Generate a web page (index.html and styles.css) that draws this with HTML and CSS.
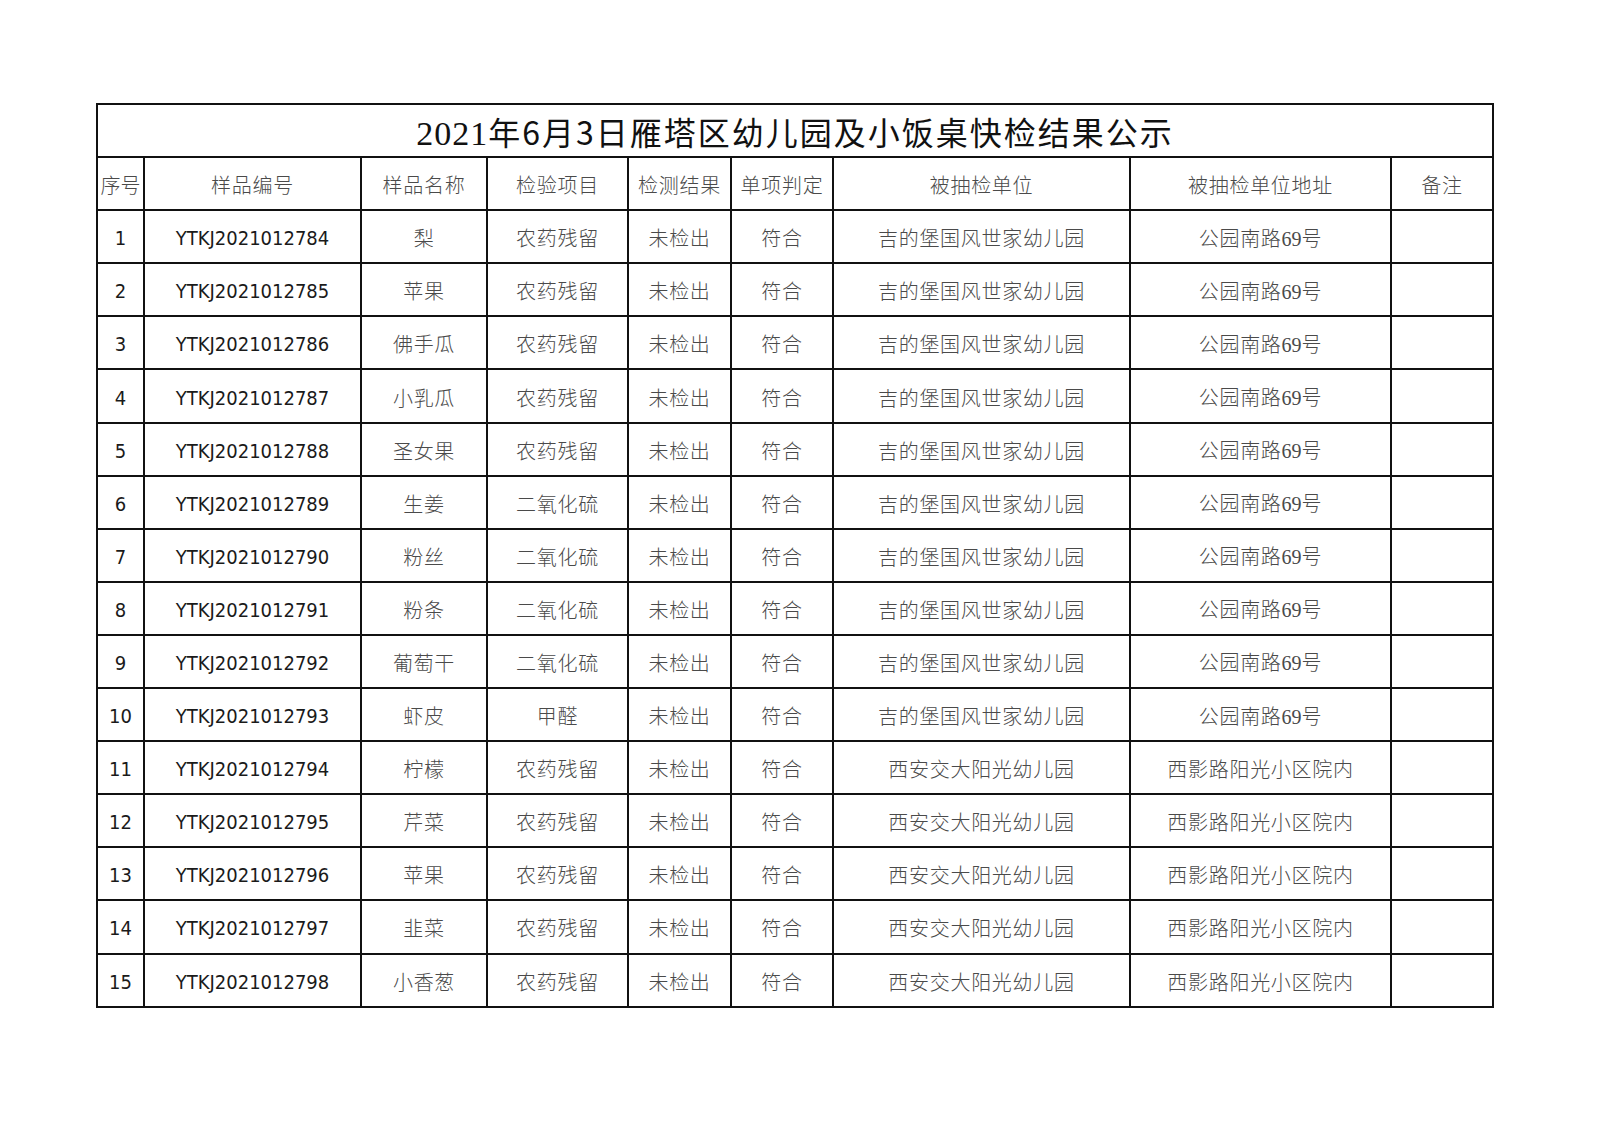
FILE: index.html
```html
<!DOCTYPE html>
<html>
<head>
<meta charset="utf-8">
<title>2021年6月3日雁塔区幼儿园及小饭桌快检结果公示</title>
<link rel="stylesheet" href="styles.css">
</head>
<body>
<div class="page">
<table class="sheet">
<colgroup>
<col class="c1"><col class="c2"><col class="c3"><col class="c4"><col class="c5"><col class="c6"><col class="c7"><col class="c8"><col class="c9">
</colgroup>
<thead>
<tr class="title-row"><th colspan="9" class="title"><span class="lat">2021</span>年6月3日雁塔区幼儿园及小饭桌快检结果公示</th></tr>
<tr class="head-row"><th class="tight">序号</th><th>样品编号</th><th>样品名称</th><th>检验项目</th><th>检测结果</th><th>单项判定</th><th>被抽检单位</th><th>被抽检单位地址</th><th>备注</th></tr>
</thead>
<tbody>
<tr><td class="num">1</td><td class="num">YTKJ2021012784</td><td>梨</td><td>农药残留</td><td>未检出</td><td>符合</td><td>吉的堡国风世家幼儿园</td><td>公园南路<span class="lat">69</span>号</td><td></td></tr>
<tr><td class="num">2</td><td class="num">YTKJ2021012785</td><td>苹果</td><td>农药残留</td><td>未检出</td><td>符合</td><td>吉的堡国风世家幼儿园</td><td>公园南路<span class="lat">69</span>号</td><td></td></tr>
<tr><td class="num">3</td><td class="num">YTKJ2021012786</td><td>佛手瓜</td><td>农药残留</td><td>未检出</td><td>符合</td><td>吉的堡国风世家幼儿园</td><td>公园南路<span class="lat">69</span>号</td><td></td></tr>
<tr><td class="num">4</td><td class="num">YTKJ2021012787</td><td>小乳瓜</td><td>农药残留</td><td>未检出</td><td>符合</td><td>吉的堡国风世家幼儿园</td><td>公园南路<span class="lat">69</span>号</td><td></td></tr>
<tr><td class="num">5</td><td class="num">YTKJ2021012788</td><td>圣女果</td><td>农药残留</td><td>未检出</td><td>符合</td><td>吉的堡国风世家幼儿园</td><td>公园南路<span class="lat">69</span>号</td><td></td></tr>
<tr><td class="num">6</td><td class="num">YTKJ2021012789</td><td>生姜</td><td>二氧化硫</td><td>未检出</td><td>符合</td><td>吉的堡国风世家幼儿园</td><td>公园南路<span class="lat">69</span>号</td><td></td></tr>
<tr><td class="num">7</td><td class="num">YTKJ2021012790</td><td>粉丝</td><td>二氧化硫</td><td>未检出</td><td>符合</td><td>吉的堡国风世家幼儿园</td><td>公园南路<span class="lat">69</span>号</td><td></td></tr>
<tr><td class="num">8</td><td class="num">YTKJ2021012791</td><td>粉条</td><td>二氧化硫</td><td>未检出</td><td>符合</td><td>吉的堡国风世家幼儿园</td><td>公园南路<span class="lat">69</span>号</td><td></td></tr>
<tr><td class="num">9</td><td class="num">YTKJ2021012792</td><td>葡萄干</td><td>二氧化硫</td><td>未检出</td><td>符合</td><td>吉的堡国风世家幼儿园</td><td>公园南路<span class="lat">69</span>号</td><td></td></tr>
<tr><td class="num">10</td><td class="num">YTKJ2021012793</td><td>虾皮</td><td>甲醛</td><td>未检出</td><td>符合</td><td>吉的堡国风世家幼儿园</td><td>公园南路<span class="lat">69</span>号</td><td></td></tr>
<tr><td class="num">11</td><td class="num">YTKJ2021012794</td><td>柠檬</td><td>农药残留</td><td>未检出</td><td>符合</td><td>西安交大阳光幼儿园</td><td>西影路阳光小区院内</td><td></td></tr>
<tr><td class="num">12</td><td class="num">YTKJ2021012795</td><td>芹菜</td><td>农药残留</td><td>未检出</td><td>符合</td><td>西安交大阳光幼儿园</td><td>西影路阳光小区院内</td><td></td></tr>
<tr><td class="num">13</td><td class="num">YTKJ2021012796</td><td>苹果</td><td>农药残留</td><td>未检出</td><td>符合</td><td>西安交大阳光幼儿园</td><td>西影路阳光小区院内</td><td></td></tr>
<tr><td class="num">14</td><td class="num">YTKJ2021012797</td><td>韭菜</td><td>农药残留</td><td>未检出</td><td>符合</td><td>西安交大阳光幼儿园</td><td>西影路阳光小区院内</td><td></td></tr>
<tr><td class="num">15</td><td class="num">YTKJ2021012798</td><td>小香葱</td><td>农药残留</td><td>未检出</td><td>符合</td><td>西安交大阳光幼儿园</td><td>西影路阳光小区院内</td><td></td></tr>
</tbody>
</table>
</div>
</body>
</html>
```
FILE: styles.css
```css
html, body {
  margin: 0;
  padding: 0;
  background: #ffffff;
}
.page {
  padding: 103px 0 0 96px;
}
.sheet {
  border-collapse: collapse;
  table-layout: fixed;
  width: 1396px;
  font-family: "Noto Sans CJK SC", sans-serif;
  font-weight: 300;
  font-size: 20px;
  color: #4a4a4a;
}
.c1 { width: 47px; }
.c2 { width: 217px; }
.c3 { width: 126px; }
.c4 { width: 141px; }
.c5 { width: 103px; }
.c6 { width: 102px; }
.c7 { width: 297px; }
.c8 { width: 261px; }
.c9 { width: 102px; }
.sheet th, .sheet td {
  border: 2px solid #111111;
  height: 48.1px;
  padding: 3px 0 0 0;
  text-align: center;
  vertical-align: middle;
  letter-spacing: 0.7px;
  font-weight: 300;
  white-space: nowrap;
  line-height: 1;
}
.sheet span.lat {
  font-family: "Liberation Serif", serif;
  font-weight: 400;
  letter-spacing: 0;
  font-size: 20px;
}
.sheet .title {
  font-size: 32px;
  letter-spacing: 2px;
  font-weight: 400;
  color: #111111;
  padding-top: 5px;
  height: 46.1px;
}
.sheet .title span.lat {
  letter-spacing: 1px;
  font-size: 34px;
}
.sheet .tight {
  letter-spacing: 0;
}
.sheet .num {
  font-family: "DejaVu Sans Condensed", "Liberation Sans", sans-serif;
  font-weight: 400;
  color: #1a1a1a;
  letter-spacing: 0;
}
```
